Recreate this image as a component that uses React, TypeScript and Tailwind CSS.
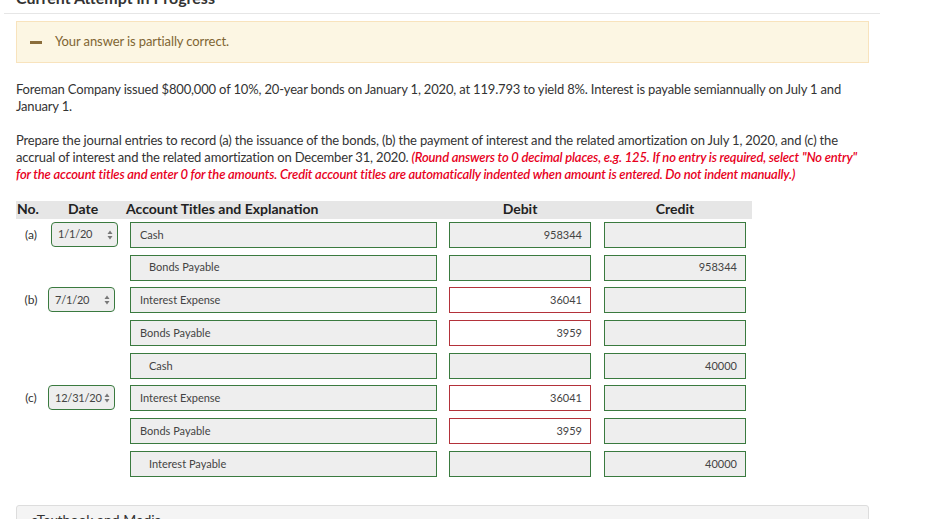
import React from "react";

type Row = {
  label?: string;
  date?: string;
  dateMl?: string;
  account: string;
  indent?: boolean;
  debit?: string;
  debitBad?: boolean;
  credit?: string;
  creditBad?: boolean;
};

const rows: Row[] = [
  { label: "(a)", date: "1/1/20", dateMl: "ml-[5px]", account: "Cash", debit: "958344" },
  { account: "Bonds Payable", indent: true, credit: "958344" },
  { label: "(b)", date: "7/1/20", dateMl: "ml-[2px]", account: "Interest Expense", debit: "36041", debitBad: true },
  { account: "Bonds Payable", debit: "3959", debitBad: true },
  { account: "Cash", indent: true, credit: "40000" },
  { label: "(c)", date: "12/31/20", dateMl: "ml-[2px]", account: "Interest Expense", debit: "36041", debitBad: true },
  { account: "Bonds Payable", debit: "3959", debitBad: true },
  { account: "Interest Payable", indent: true, credit: "40000" },
];

function Box({ value, bad, right, indent, w }: { value?: string; bad?: boolean; right?: boolean; indent?: boolean; w: string }) {
  return (
    <div
      className={`${w} h-[26px] border flex items-center text-[11px] text-[#444] ${
        bad ? "border-[#b3323a] bg-white" : "border-[#3a7a3f] bg-[#eeeeee]"
      } ${right ? "justify-end pr-[8px]" : indent ? "pl-[18px]" : "pl-[9px]"}`}
    >
      {value}
    </div>
  );
}

function Arrows() {
  return (
    <svg width="6" height="10" viewBox="0 0 6 10" className="shrink-0">
      <path d="M3 0.5 L5.5 4 L0.5 4 Z" fill="#777" />
      <path d="M3 9.5 L5.5 6 L0.5 6 Z" fill="#777" />
    </svg>
  );
}

export default function App() {
  return (
    <div className="w-[925px] h-[519px] overflow-hidden bg-white font-['Lato','Liberation_Sans',sans-serif] text-[#333]">
      <div className="ml-[4px] w-[876px] border-b border-[#e6e6e6] h-[14px] overflow-hidden">
        <div className="mt-[-12px] pl-[12px] text-[16px] leading-[20px] font-bold text-[#333]">Current Attempt in Progress</div>
      </div>
      <div className="pl-[16px] w-[869px]">
        <div className="mt-[7px] h-[42px] border border-[#f8e3bd] bg-[#fcf6e3] flex items-center pl-[13px]">
          <div className="w-[12px] h-[3px] bg-[#8a6d3b]" />
          <div className="ml-[13px] text-[13px] tracking-[-0.1px] text-[#7f6532]">Your answer is partially correct.</div>
        </div>
        <p className="mt-[18px] text-[13px] leading-[17px] tracking-[-0.17px] pr-[8px]">
          Foreman Company issued $800,000 of 10%, 20-year bonds on January 1, 2020, at 119.793 to yield 8%. Interest is payable semiannually on July 1 and January 1.
        </p>
        <p className="mt-[17px] text-[13px] leading-[17px] tracking-[-0.17px] pr-[4px]">
          Prepare the journal entries to record (a) the issuance of the bonds, (b) the payment of interest and the related amortization on July 1, 2020, and (c) the accrual of interest and the related amortization on December 31, 2020.{" "}
          <span className="italic font-semibold text-[#e8001c]">
            (Round answers to 0 decimal places, e.g. 125. If no entry is required, select "No entry" for the account titles and enter 0 for the amounts. Credit account titles are automatically indented when amount is entered. Do not indent manually.)
          </span>
        </p>
      </div>
      <div className="ml-[16px] mt-[18px] w-[736px]">
        <div className="flex h-[18px] items-center pb-[2px] bg-[#e6e6e6] text-[14px] leading-[16px] font-bold text-[#222]">
          <div className="w-[30px] pl-[1px]">No.</div>
          <div className="w-[80px] pl-[22px]">Date</div>
          <div className="w-[315px]">Account Titles and Explanation</div>
          <div className="w-[157px] pl-[8px] flex"><span className="w-[142px] text-center">Debit</span></div>
          <div className="w-[154px] pl-[6px] flex"><span className="w-[142px] text-center">Credit</span></div>
        </div>
        <div className="pt-[3px]">
          {rows.map((r, i) => (
            <div key={i} className="flex h-[32.7px] items-start">
              <div className="w-[30px] h-[26px] flex items-center justify-center text-[12px] text-[#333]">{r.label}</div>
              <div className="w-[80px] h-[26px]">
                {r.date && (
                  <div className={`${r.dateMl} w-[67px] h-[25px] rounded-[4px] border border-[#3a7a3f] bg-[#eeeeee] flex items-center justify-between pl-[6px] pr-[4px] text-[11px] tracking-[-0.2px] text-[#444]`}>
                    <span>{r.date}</span>
                    <Arrows />
                  </div>
                )}
              </div>
              <div className="w-[315px] pl-[4px]">
                <Box w="w-[307px]" value={r.account} indent={r.indent} />
              </div>
              <div className="w-[157px] pl-[8px]">
                <Box w="w-[142px]" value={r.debit} bad={r.debitBad} right />
              </div>
              <div className="w-[154px] pl-[6px]">
                <Box w="w-[142px]" value={r.credit} bad={r.creditBad} right />
              </div>
            </div>
          ))}
        </div>
      </div>
      <div className="ml-[16px] mt-[21px] w-[853px] h-[40px] border border-[#dddddd] rounded-[3px] bg-[#f4f4f4] pl-[14px] pt-[3px] text-[14px] text-[#333]">
        eTextbook and Media
      </div>
    </div>
  );
}
